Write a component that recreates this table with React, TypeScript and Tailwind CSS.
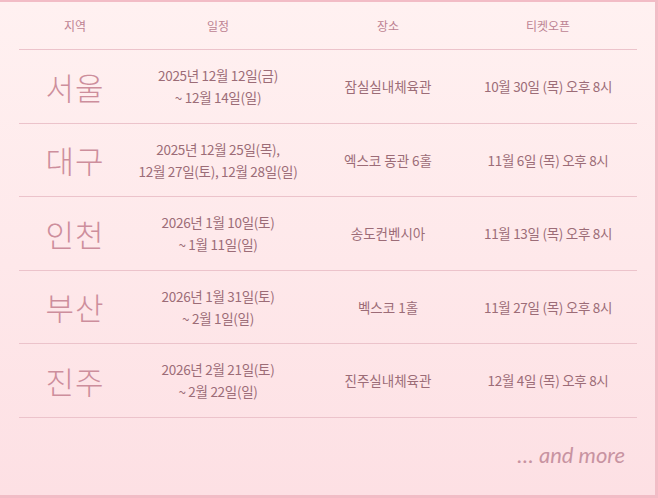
import React from "react";

const rows = [
  { city: "서울", dates: ["2025년 12월 12일(금)", "~ 12월 14일(일)"], venue: "잠실실내체육관", open: "10월 30일 (목) 오후 8시" },
  { city: "대구", dates: ["2025년 12월 25일(목),", "12월 27일(토), 12월 28일(일)"], venue: "엑스코 동관 6홀", open: "11월 6일 (목) 오후 8시" },
  { city: "인천", dates: ["2026년 1월 10일(토)", "~ 1월 11일(일)"], venue: "송도컨벤시아", open: "11월 13일 (목) 오후 8시" },
  { city: "부산", dates: ["2026년 1월 31일(토)", "~ 2월 1일(일)"], venue: "벡스코 1홀", open: "11월 27일 (목) 오후 8시" },
  { city: "진주", dates: ["2026년 2월 21일(토)", "~ 2월 22일(일)"], venue: "진주실내체육관", open: "12월 4일 (목) 오후 8시" },
];

const kr = { fontFamily: '"Noto Sans CJK KR", "Noto Sans", sans-serif' };

export default function App() {
  return (
    <div
      className="w-[658px] h-[498px] bg-gradient-to-b from-[#fff1f1] to-[#fde0e4] border-t-2 border-r-[3px] border-b-[3px] border-[#f2bcc6] flex flex-col"
      style={kr}
    >
      <div className="ml-[19px] w-[618px]">
        {/* header */}
        <div className="h-[48px] grid grid-cols-[112px_174px_166px_154px] items-center text-[12px] text-[#bd8393] border-b border-[#ecc3cb]">
          <div className="text-center">지역</div>
          <div className="text-center">일정</div>
          <div className="text-center">장소</div>
          <div className="text-center">티켓오픈</div>
        </div>

        {rows.map((r) => (
          <div
            key={r.city}
            className="h-[73.5px] grid grid-cols-[112px_174px_166px_154px] items-center border-b border-[#ecc3cb] text-[13.5px] text-[#9c6c77]"
          >
            <div className="text-center text-[31px] font-light text-[#cd8e9c] leading-none tracking-[1px]">
              {r.city}
            </div>
            <div className="text-center leading-[22px] tracking-[-0.3px]">
              {r.dates.map((d) => (
                <div key={d}>{d}</div>
              ))}
            </div>
            <div className="text-center">{r.venue}</div>
            <div className="text-center tracking-[-0.3px]">{r.open}</div>
          </div>
        ))}
      </div>

      <div className="flex justify-end pr-[30px] pt-[20px]">
        <span
          className="text-[22px] italic text-[#c893a1]"
          style={{ fontFamily: 'Lato, "Open Sans", sans-serif' }}
        >
          … and more
        </span>
      </div>
    </div>
  );
}
